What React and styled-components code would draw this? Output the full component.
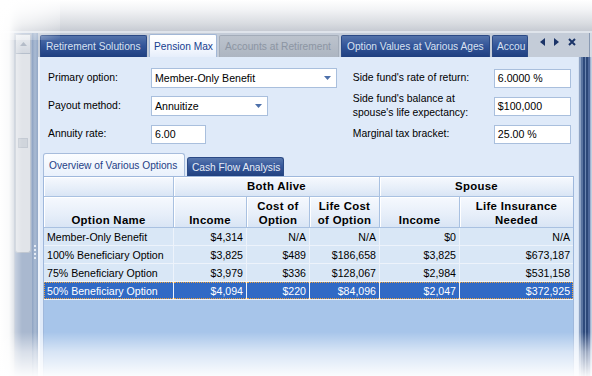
import React from 'react';
import styled, { createGlobalStyle, css } from 'styled-components';

const Global = createGlobalStyle`
  html, body { margin: 0; padding: 0; background: #fff; }
  body {
    width: 592px; height: 376px; overflow: hidden;
    font-family: "Liberation Sans", Arial, sans-serif;
    font-size: 10.4px; color: #000;
  }
  #root { width: 592px; height: 376px; }
`;

const Page = styled.div`
  position: relative;
  width: 592px; height: 376px; overflow: hidden;
  display: flex; flex-direction: column;
  background: #fff;
`;

const TopBand = styled.div`
  flex: none; height: 31px;
  background: linear-gradient(180deg, #ffffff 0%, #f3f4f6 30%, #d9dce1 75%, #c7cbd3 100%);
  border-bottom: 2px solid #dfe4eb;
`;

const Body = styled.div`
  flex: 1; display: flex; min-height: 0;
`;

const LeftGap = styled.div`
  flex: none; width: 14px;
  background: #c9cfd8;
`;

const ScrollBar = styled.div`
  flex: none; width: 18px;
  display: flex; flex-direction: column;
  background: #a9b8cf;
  border-left: 1px solid #b3bdcc;
  box-sizing: border-box;
`;

const ScrollUp = styled.div`
  flex: none; height: 18px;
  display: flex; align-items: center; justify-content: center;
  background: linear-gradient(180deg, #e9ecf0, #d3d8e0);
  border: 1px solid #b6bfcc;
  margin: 1px 1px 0 0;
`;

const ScrollThumb = styled.div`
  flex: none; height: 198px;
  background: #e1e4e9;
  border: 1px solid #c0c7d1;
  border-top: none;
  border-radius: 0 0 3px 3px;
  margin-right: 1px;
  display: flex; align-items: center; justify-content: center;
`;

const Grip = styled.div`
  width: 8px; height: 8px;
  background: #d0d5dc;
  border: 1px solid #c4cad3;
  margin-top: -20px;
`;

const Splitter = styled.div`
  flex: none; width: 6px;
  background: linear-gradient(90deg, #8ea3c2, #a9bad2 50%, #93a8c6);
  display: flex; flex-direction: column; align-items: center;
  padding-top: 212px; gap: 2px;
  box-sizing: border-box;
`;

const Dot = styled.div`
  width: 2px; height: 2px; background: #e6ecf5;
`;

const Main = styled.div`
  flex: none; width: 540px;
  display: flex; flex-direction: column;
`;

const TabStrip = styled.div`
  flex: none; height: 24px;
  display: flex; align-items: flex-end;
  background: #c4ccd8;
  box-sizing: border-box;
  padding-left: 2px;
`;

const TabList = styled.div`
  width: 488px; display: flex; align-items: flex-end; gap: 2px;
  overflow: hidden; height: 24px;
`;

const Tab = styled.div`
  flex: none;
  width: ${p => p.$w}px;
  height: 22px;
  box-sizing: border-box;
  display: flex; align-items: center;
  padding-left: ${p => p.$pad ?? 5}px;
  white-space: nowrap; overflow: hidden;
  font-size: 10.2px;
  border: 1px solid #2b4a86;
  border-bottom: none;
  border-radius: 2px 2px 0 0;
  background: linear-gradient(180deg, #5473aa 0%, #34569a 45%, #1f3f80 100%);
  color: #d9e2f1;
  ${p => p.$active && css`
    height: 23px;
    padding-left: 4px;
    background: linear-gradient(180deg, #ffffff 0%, #f4f8fe 60%, #e6eefb 100%);
    border-color: #a2b7d6;
    color: #17408e;
  `}
  ${p => p.$disabled && css`
    background: linear-gradient(180deg, #bcc3cd 0%, #adb5c1 100%);
    border-color: #a3acb9;
    color: #8c95a3;
  `}
`;

const NavButtons = styled.div`
  flex: 1; height: 24px;
  display: flex; align-items: center; justify-content: flex-end;
  gap: 9px; padding-right: 2px; padding-bottom: 6px;
  box-sizing: border-box;
`;

const RightFrame = styled.div`
  flex: none; width: 14px;
  display: flex; flex-direction: column;
`;

const RightTop = styled.div`
  flex: none; height: 24px;
  background: linear-gradient(90deg, #c4ccd8 0 11px, #8a9ab3 11px 12px, #d5dbe4 12px);
`;

const RightStripes = styled.div`
  flex: 1;
  background: linear-gradient(90deg,
    #d4e0f0 0 1px, #8ea3c4 1px 3px, #5a74a0 3px 5px, #2e4a7c 5px 7px,
    #6c86b0 7px 8px, #2c4778 8px 10px, #4d679a 10px 12px, #9fb2cf 12px 13px, #c3cfe0 13px);
`;

const Content = styled.div`
  flex: 1; min-height: 0;
  display: flex; flex-direction: column;
  background: #dfeaf9;
  border-left: 2px solid #eef3fb;
  padding: 0 4px 0 3px;
`;

const Form = styled.div`
  flex: none;
  display: flex;
  padding: 7px 0 0 5px;
  height: 89px;
`;

const FieldGroup = styled.div`
  width: ${p => p.$w}px;
  display: flex; flex-direction: column;
`;

const FieldRow = styled.div`
  height: 28px;
  display: grid;
  grid-template-columns: ${p => p.$label}px auto;
  align-items: center;
`;

const Label = styled.div`
  line-height: 14px;
  font-size: 10.4px;
`;

const Select = styled.div`
  width: ${p => p.$w}px; height: 20px;
  box-sizing: border-box;
  background: #fff;
  border: 1px solid #a9bfdd;
  display: flex; align-items: center; justify-content: space-between;
  padding: 0 5px 0 3px;
  font-size: 10.6px;
`;

const Input = styled.div`
  width: ${p => p.$w}px; height: ${p => p.$h}px;
  box-sizing: border-box;
  background: #fff;
  border: 1px solid #a9bfdd;
  display: flex; align-items: center;
  padding: 0 3px;
  font-size: 10.6px;
`;

const SubTabs = styled.div`
  flex: none; height: 23px;
  display: flex; align-items: flex-end; gap: 2px;
`;

const SubTab = styled.div`
  flex: none;
  width: ${p => p.$w}px;
  height: 19px;
  box-sizing: border-box;
  display: flex; align-items: center;
  padding-left: 4px;
  white-space: nowrap;
  font-size: 10.2px;
  border: 1px solid #2b4a86;
  border-bottom: none;
  border-radius: 3px 3px 0 0;
  background: linear-gradient(180deg, #5877ad 0%, #36589b 45%, #21417f 100%);
  color: #e6ecf6;
  ${p => p.$active && css`
    height: 23px;
    padding-left: 5px;
    background: linear-gradient(180deg, #fbfdff 0%, #e9f1fc 100%);
    border-color: #a6bcdc;
    color: #1f3f86;
  `}
`;

const GridArea = styled.div`
  flex: 1; min-height: 0;
  background: #a7c5ea;
  border: 1px solid #9fb8dc;
  border-bottom: none;
  overflow: hidden;
`;

const Table = styled.table`
  border-collapse: separate;
  border-spacing: 0;
  table-layout: fixed;
  width: 530px;
`;

const HeadCell = styled.th`
  box-sizing: border-box;
  height: ${p => p.$h}px;
  padding: 0 2px ${p => (p.$h > 25 ? 0 : 2)}px;
  vertical-align: ${p => (p.$h > 25 ? 'bottom' : 'middle')};
  text-align: center;
  font-weight: bold;
  font-size: 11.4px;
  letter-spacing: 0.3px;
  line-height: 14px;
  background: linear-gradient(180deg, #f6f9fe 0%, #e6eef9 60%, #d9e5f5 100%);
  border-right: 1px solid #a9c1e1;
  border-bottom: 1px solid #a9c1e1;
  box-shadow: inset 1px 1px 0 #ffffff;
`;

const Cell = styled.td`
  box-sizing: border-box;
  position: relative;
  height: 18px;
  padding: 0 3px;
  white-space: nowrap;
  overflow: hidden;
  text-align: ${p => (p.$num ? 'right' : 'left')};
  font-size: 10.6px;
  background: #d9e7f6;
  border-right: 1px solid #edf3fb;
  border-bottom: 1px solid #edf3fb;
  ${p => p.$sel && css`
    background: #316ac5;
    color: #fff;
    &::after {
      content: '';
      position: absolute; left: 0; right: 0; top: 0; bottom: 0;
      border-top: 1px dotted #f2a53a;
      border-bottom: 1px dotted #f2a53a;
      ${p.$first ? 'border-left: 1px dotted #f2a53a;' : ''}
      ${p.$last ? 'border-right: 1px dotted #f2a53a;' : ''}
      pointer-events: none;
    }
  `}
`;

const FadeLeft = styled.div`
  position: absolute; left: 0; top: 0; bottom: 0; width: 22px;
  background: linear-gradient(90deg, rgba(255,255,255,1) 0px, rgba(255,255,255,0.9) 9px, rgba(255,255,255,0.35) 15px, rgba(255,255,255,0) 22px);
  pointer-events: none;
`;

const FadeBottom = styled.div`
  position: absolute; left: 0; right: 0; bottom: 0; height: 44px;
  background: linear-gradient(180deg, rgba(255,255,255,0) 0%, rgba(255,255,255,0.55) 45%, rgba(255,255,255,0.95) 100%);
  pointer-events: none;
`;

const FadeTopLeft = styled.div`
  position: absolute; left: 0; top: 0; width: 60px; height: 40px;
  background: radial-gradient(ellipse at 0 0, rgba(255,255,255,1) 0%, rgba(255,255,255,0.6) 50%, rgba(255,255,255,0) 100%);
  pointer-events: none;
`;

const Arrow = ({ color = '#4d70aa' }) => (
  <svg width="7" height="4" viewBox="0 0 7 4"><path d="M0 0h7L3.5 4z" fill={color} /></svg>
);

const NavLeft = () => (
  <svg width="5" height="8" viewBox="0 0 5 8"><path d="M5 0v8L0 4z" fill="#1b3468" /></svg>
);
const NavRight = () => (
  <svg width="5" height="8" viewBox="0 0 5 8"><path d="M0 0v8l5-4z" fill="#1b3468" /></svg>
);
const NavClose = () => (
  <svg width="8" height="8" viewBox="0 0 8 8"><path d="M1 1l6 6M7 1L1 7" stroke="#1b3468" strokeWidth="2" /></svg>
);
const UpArrow = () => (
  <svg width="7" height="4" viewBox="0 0 7 4"><path d="M0 4h7L3.5 0z" fill="#b4bcc8" /></svg>
);

const rows = [
  ['Member-Only Benefit', '$4,314', 'N/A', 'N/A', '$0', 'N/A'],
  ['100% Beneficiary Option', '$3,825', '$489', '$186,658', '$3,825', '$673,187'],
  ['75% Beneficiary Option', '$3,979', '$336', '$128,067', '$2,984', '$531,158'],
  ['50% Beneficiary Option', '$4,094', '$220', '$84,096', '$2,047', '$372,925'],
];

const colWidths = [130, 73, 63, 70, 80, 114];

export default function App() {
  return (
    <>
      <Global />
      <Page>
        <TopBand />
        <Body>
          <LeftGap />
          <ScrollBar>
            <ScrollUp><UpArrow /></ScrollUp>
            <ScrollThumb><Grip /></ScrollThumb>
          </ScrollBar>
          <Splitter>
            <Dot /><Dot /><Dot /><Dot />
          </Splitter>
          <Main>
            <TabStrip>
              <TabList>
                <Tab $w={107}>Retirement Solutions</Tab>
                <Tab $w={68} $active>Pension Max</Tab>
                <Tab $w={120} $disabled>Accounts at Retirement</Tab>
                <Tab $w={149}>Option Values at Various Ages</Tab>
                <Tab $w={36} $pad={4}>Accou</Tab>
              </TabList>
              <NavButtons>
                <NavLeft />
                <NavRight />
                <NavClose />
              </NavButtons>
            </TabStrip>
            <Content>
              <Form>
                <FieldGroup $w={306}>
                  <FieldRow $label={103}>
                    <Label>Primary option:</Label>
                    <Select $w={186}>Member-Only Benefit<Arrow /></Select>
                  </FieldRow>
                  <FieldRow $label={103}>
                    <Label>Payout method:</Label>
                    <Select $w={117}>Annuitize<Arrow /></Select>
                  </FieldRow>
                  <FieldRow $label={103}>
                    <Label>Annuity rate:</Label>
                    <Input $w={55} $h={19}>6.00</Input>
                  </FieldRow>
                </FieldGroup>
                <FieldGroup $w={222}>
                  <FieldRow $label={141}>
                    <Label>Side fund's rate of return:</Label>
                    <Input $w={77} $h={19}>6.0000 %</Input>
                  </FieldRow>
                  <FieldRow $label={141}>
                    <Label>Side fund's balance at<br />spouse's life expectancy:</Label>
                    <Input $w={77} $h={19}>$100,000</Input>
                  </FieldRow>
                  <FieldRow $label={141}>
                    <Label>Marginal tax bracket:</Label>
                    <Input $w={77} $h={19}>25.00 %</Input>
                  </FieldRow>
                </FieldGroup>
              </Form>
              <SubTabs>
                <SubTab $w={142} $active>Overview of Various Options</SubTab>
                <SubTab $w={97}>Cash Flow Analysis</SubTab>
              </SubTabs>
              <GridArea>
                <Table>
                  <colgroup>
                    {colWidths.map((w, i) => <col key={i} style={{ width: w }} />)}
                  </colgroup>
                  <thead>
                    <tr>
                      <HeadCell $h={20}></HeadCell>
                      <HeadCell $h={20} colSpan={3}>Both Alive</HeadCell>
                      <HeadCell $h={20} colSpan={2}>Spouse</HeadCell>
                    </tr>
                    <tr>
                      <HeadCell $h={31}>Option Name</HeadCell>
                      <HeadCell $h={31}>Income</HeadCell>
                      <HeadCell $h={31}>Cost of<br />Option</HeadCell>
                      <HeadCell $h={31}>Life Cost<br />of Option</HeadCell>
                      <HeadCell $h={31}>Income</HeadCell>
                      <HeadCell $h={31}>Life Insurance<br />Needed</HeadCell>
                    </tr>
                  </thead>
                  <tbody>
                    {rows.map((r, ri) => {
                      const sel = ri === rows.length - 1;
                      return (
                        <tr key={ri}>
                          {r.map((v, ci) => (
                            <Cell
                              key={ci}
                              $num={ci > 0}
                              $sel={sel}
                              $first={ci === 0}
                              $last={ci === r.length - 1}
                            >
                              {v}
                            </Cell>
                          ))}
                        </tr>
                      );
                    })}
                  </tbody>
                </Table>
              </GridArea>
            </Content>
          </Main>
          <RightFrame>
            <RightTop />
            <RightStripes />
          </RightFrame>
        </Body>
        <FadeLeft />
        <FadeTopLeft />
        <FadeBottom />
      </Page>
    </>
  );
}
